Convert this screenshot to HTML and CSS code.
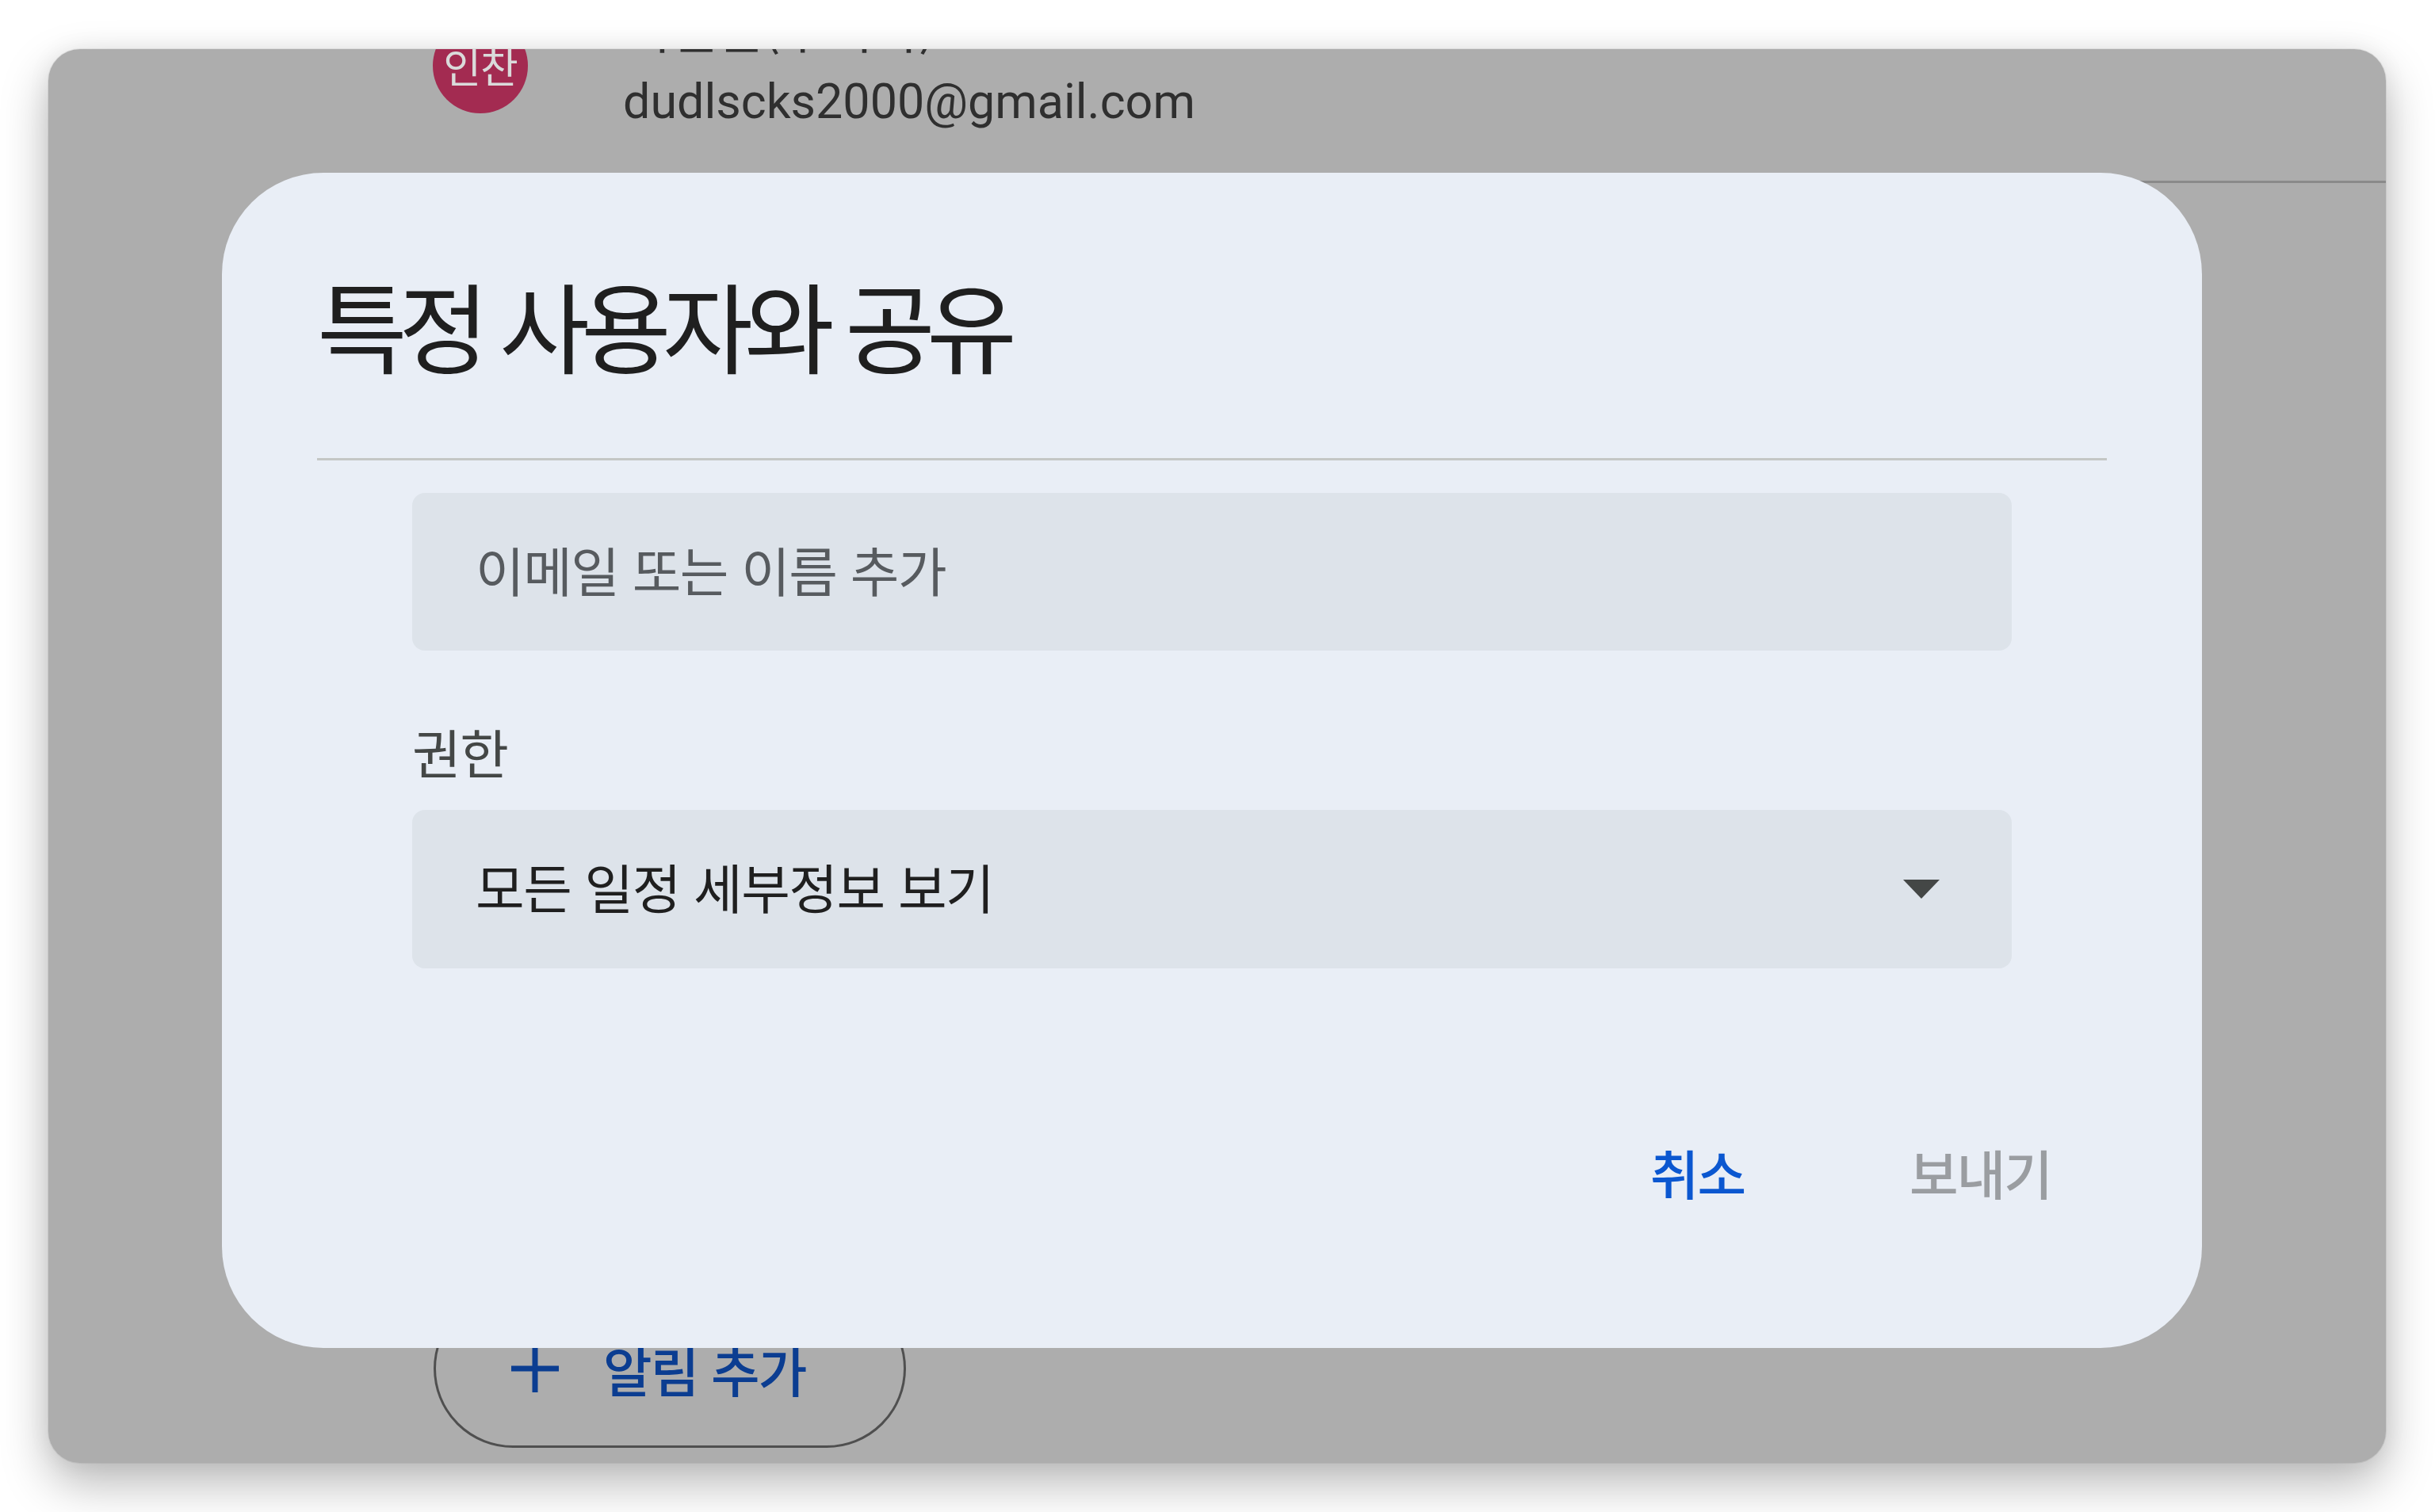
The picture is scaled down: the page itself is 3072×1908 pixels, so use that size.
FILE: index.html
```html
<!DOCTYPE html>
<html lang="ko">
<head>
<meta charset="utf-8">
<title>특정 사용자와 공유</title>
<link rel="stylesheet" href="styles.css">
</head>
<body>
<div class="window">
  <div class="page">
    <div class="attendee">
      <div class="avatar">인찬</div>
      <div class="who">
        <div class="who-name">이인찬(주최자)</div>
        <div class="who-mail">dudlscks2000@gmail.com</div>
      </div>
    </div>
    <div class="page-rule"></div>
    <button class="add-alert" type="button">
      <svg class="add-alert-icon" width="60" height="60" viewBox="0 0 60 60" aria-hidden="true"><path d="M30 0v60M0 30h60" stroke="currentColor" stroke-width="7" fill="none"/></svg>
      <span>알림 추가</span>
    </button>
  </div>

  <div class="dialog" role="dialog" aria-labelledby="dlg-title">
    <div class="dialog-head">
      <h1 class="dialog-title" id="dlg-title">특정 사용자와 공유</h1>
    </div>
    <div class="dialog-body">
      <div class="field"><span class="placeholder">이메일 또는 이름 추가</span></div>
      <div class="field-label">권한</div>
      <div class="field select">
        <span class="select-value">모든 일정 세부정보 보기</span>
        <svg class="select-arrow" width="46" height="24" viewBox="0 0 46 24" aria-hidden="true"><polygon points="0,0 46,0 23,24" fill="currentColor"/></svg>
      </div>
    </div>
    <div class="actions">
      <button class="btn btn-cancel" type="button">취소</button>
      <button class="btn btn-send" type="button">보내기</button>
    </div>
  </div>
</div>
</body>
</html>
```

FILE: styles.css
```css
html, body {
  margin: 0;
  padding: 0;
  background: #ffffff;
}

body {
  width: 3072px;
  height: 1908px;
  overflow: hidden;
  font-family: "Noto Sans CJK KR", "Noto Sans", sans-serif;
}

.window {
  position: relative;
  margin: 62px 0 0 61px;
  width: 2949px;
  height: 1784px;
  border-radius: 40px;
  background: #adadad;
  overflow: hidden;
  box-shadow: 0 0 0 1px rgba(0, 0, 0, 0.06), 0 26px 60px rgba(0, 0, 0, 0.28), 0 0 30px rgba(0, 0, 0, 0.06);
}

/* ---------- page behind the scrim ---------- */
.page {
  display: flex;
  flex-direction: column;
}

.attendee {
  display: flex;
  align-items: center;
  margin: -75px 0 0 485px;
  height: 192px;
}

.avatar {
  width: 120px;
  height: 120px;
  border-radius: 50%;
  background: #a32b51;
  color: #dadada;
  font-size: 52px;
  line-height: 120px;
  letter-spacing: -1px;
  text-align: center;
  flex: none;
}

.who {
  margin-left: 120px;
  color: #2f2f2f;
}

.who-name {
  font-size: 66px;
  line-height: 91px;
  height: 91px;
  letter-spacing: -2px;
}

.who-mail {
  font-family: Roboto, "Liberation Sans", sans-serif;
  font-size: 61px;
  line-height: 101px;
  height: 101px;
}

.page-rule {
  margin: 49px 0 0 300px;
  height: 3px;
  background: #8a8a8a;
}

.add-alert {
  margin: 1396px 0 0 486px;
  width: 596px;
  height: 200px;
  box-sizing: border-box;
  border: 3px solid #4f4f4f;
  border-radius: 100px;
  background: transparent;
  display: flex;
  align-items: center;
  gap: 56px;
  padding: 0 0 0 95px;
  color: #0b3d91;
  font-family: "Noto Sans CJK KR", sans-serif;
  font-size: 67px;
  font-weight: 500;
  letter-spacing: -2px;
}

.add-alert-icon {
  flex: none;
}

/* ---------- dialog ---------- */
.dialog {
  position: absolute;
  left: 219px;
  top: 156px;
  width: 2498px;
  height: 1483px;
  box-sizing: border-box;
  padding: 0 120px;
  background: #e9eef6;
  border-radius: 128px;
  display: flex;
  flex-direction: column;
}

.dialog-head {
  padding: 124px 0 104px;
  border-bottom: 3px solid #c4c7c5;
}

.dialog-title {
  margin: 0;
  font-size: 124px;
  line-height: 132px;
  font-weight: 400;
  letter-spacing: -11px;
  color: #1f1f1f;
}

.dialog-body {
  padding: 41px 120px 0;
  display: flex;
  flex-direction: column;
}

.field {
  height: 199px;
  box-sizing: border-box;
  border-radius: 16px;
  background: #dde3ea;
  display: flex;
  align-items: center;
  padding: 0 91px 8px 80px;
  font-size: 67px;
  line-height: 80px;
  letter-spacing: -1.5px;
}

.placeholder {
  color: #575b5f;
}

.field-label {
  margin-top: 87px;
  height: 80px;
  font-size: 67px;
  line-height: 80px;
  letter-spacing: -1.5px;
  color: #444746;
}

.select {
  margin-top: 34px;
  height: 200px;
  justify-content: space-between;
}

.select-value {
  color: #1f1f1f;
}

.select-arrow {
  color: #444746;
  flex: none;
  margin-top: 8px;
}

.actions {
  margin-top: 196px;
  height: 120px;
  display: flex;
  justify-content: flex-end;
  align-items: center;
  gap: 136px;
  padding-right: 34px;
}

.btn {
  border: 0;
  background: transparent;
  padding: 0 36px;
  height: 120px;
  font-family: "Noto Sans CJK KR", sans-serif;
  font-size: 67px;
  font-weight: 500;
  letter-spacing: -2px;
  cursor: pointer;
}

.btn-cancel {
  color: #0b57d0;
}

.btn-send {
  color: #9a9da1;
}
```
